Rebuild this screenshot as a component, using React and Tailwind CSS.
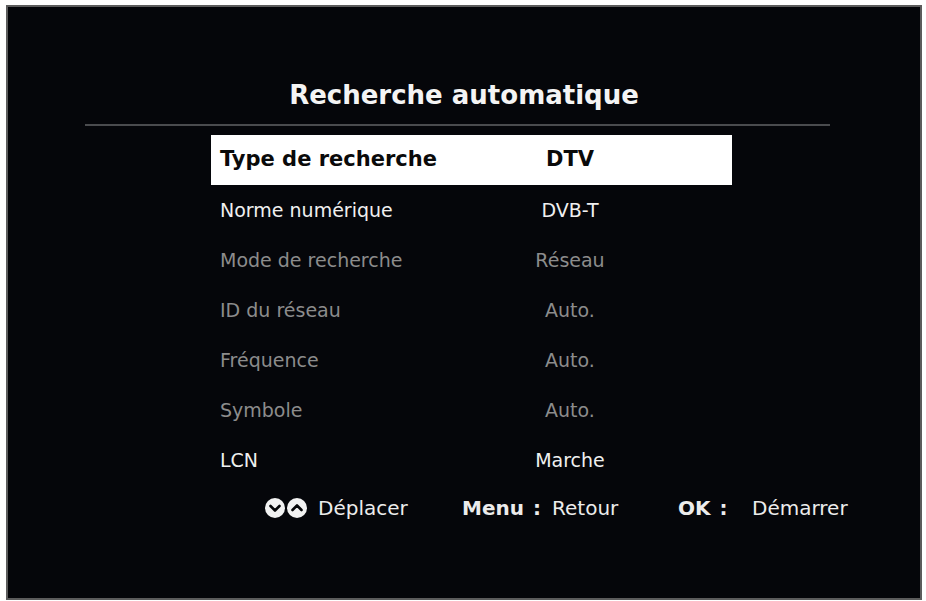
import React from "react";

const rows = [
  { label: "Type de recherche", value: "DTV", active: true },
  { label: "Norme numérique", value: "DVB-T" },
  { label: "Mode de recherche", value: "Réseau", disabled: true },
  { label: "ID du réseau", value: "Auto.", disabled: true },
  { label: "Fréquence", value: "Auto.", disabled: true },
  { label: "Symbole", value: "Auto.", disabled: true },
  { label: "LCN", value: "Marche" },
];

const ArrowBadge = ({ up }) => (
  <svg width="20" height="20" viewBox="0 0 20 20">
    <circle cx="10" cy="10" r="10" fill="#f2f2f2" />
    <path
      d={up ? "M5.5 12 L10 7.5 L14.5 12" : "M5.5 8 L10 12.5 L14.5 8"}
      fill="none"
      stroke="#050608"
      strokeWidth="2.6"
      strokeLinecap="round"
      strokeLinejoin="round"
    />
  </svg>
);

const App = () => {
  return (
    <div className="w-[926px] h-[601px] bg-white pt-[5px] pl-[6px] pr-[4px] pb-[1px] font-['DejaVu_Sans',sans-serif]">
      <div className="h-full border-2 border-[#5c5c5c] bg-[#05060a] flex flex-col">
        {/* Titre */}
        <h1 className="mt-[73px] text-center text-[26px] leading-[30px] font-bold text-[#f4f4f4]">
          Recherche automatique
        </h1>
        <div className="mt-[14px] ml-[77px] w-[745px] h-[2px] bg-[#4a4b4e]"></div>

        {/* Liste des réglages */}
        <div className="mt-[9px] ml-[203px] w-[521px] flex flex-col">
          {rows.map((r) => (
            <div
              key={r.label}
              className={
                r.active
                  ? "h-[50px] flex items-center bg-white text-[#0a0a0a] text-[21px] font-bold"
                  : r.disabled
                  ? "h-[50px] flex items-center text-[#8c8c8c] text-[19px]"
                  : "h-[50px] flex items-center text-[#f0f0f0] text-[19px]"
              }
            >
              <span className="w-[290px] pl-[9px]">{r.label}</span>
              <span className="w-[138px] text-center">{r.value}</span>
            </div>
          ))}
        </div>

        {/* Barre d'aide */}
        <div className="h-[46px] pl-[257px] flex items-center text-[20px] text-[#ececec]">
          <div className="w-[197px] flex items-center">
            <div className="flex gap-[2px]">
              <ArrowBadge />
              <ArrowBadge up />
            </div>
            <span className="ml-[11px]">Déplacer</span>
          </div>
          <div className="w-[90px] flex items-center">
            <span className="font-bold">Menu</span>
            <span className="font-bold ml-[9px]">:</span>
          </div>
          <span className="w-[126px]">Retour</span>
          <div className="w-[74px] flex items-center">
            <span className="font-bold">OK</span>
            <span className="font-bold ml-[9px]">:</span>
          </div>
          <span>Démarrer</span>
        </div>
      </div>
    </div>
  );
};

export default App;
